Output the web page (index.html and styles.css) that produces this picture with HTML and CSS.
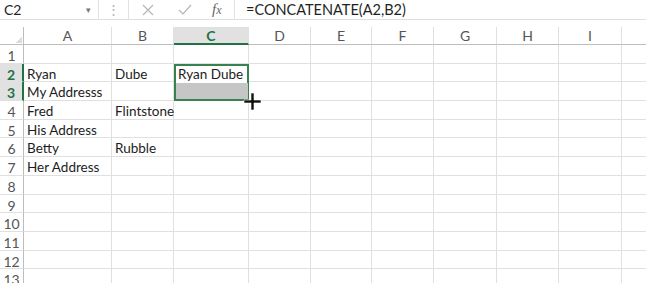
FILE: index.html
```html
<!DOCTYPE html>
<html>
<head>
  <meta charset="UTF-8">
  <title>Sheet1</title>
  <link rel="stylesheet" href="styles.css">
</head>
<body>
  <div class="formula-bar">
    <div class="name-box">C2 <span class="caret">&#9662;</span></div>
    <div class="grip">&#8942;</div>
    <div class="fx-buttons">
      <svg class="btn-x" width="12" height="12" viewBox="0 0 12 12"><path d="M1 1 L11 11 M11 1 L1 11" stroke="#b5b5b5" stroke-width="1.2" fill="none"/></svg>
      <svg class="btn-ok" width="14" height="11" viewBox="0 0 14 11"><path d="M1 6 L5 10 L13 1" stroke="#b5b5b5" stroke-width="1.2" fill="none"/></svg>
      <span class="fx">f<span class="x">x</span></span>
    </div>
    <div class="formula">=CONCATENATE(A2,B2)</div>
  </div>

  <div class="sheet-wrap">
  <div class="sheet">
    <div class="corner"></div>
    <div class="ch">A</div><div class="ch">B</div><div class="ch sel">C</div><div class="ch">D</div><div class="ch">E</div>
    <div class="ch">F</div><div class="ch">G</div><div class="ch">H</div><div class="ch">I</div><div class="ch"></div>

    <div class="rh">1</div><div></div><div></div><div></div><div></div><div></div><div></div><div></div><div></div><div></div><div></div>

    <div class="rh sel">2</div><div>Ryan</div><div>Dube</div>
    <div class="active">
      <div class="active-top">Ryan Dube</div>
      <div class="active-fill"></div>
      <svg class="cross" width="19" height="19" viewBox="0 0 19 19">
        <path d="M8 1 H11 V8 H18 V11 H11 V18 H8 V11 H1 V8 H8 Z" fill="#111" stroke="#fff" stroke-width="0.6"/>
      </svg>
    </div>
    <div></div><div></div><div></div><div></div><div></div><div></div><div></div>

    <div class="rh sel">3</div><div>My Addresss</div><div></div><div></div><div></div><div></div><div></div><div></div><div></div><div></div>

    <div class="rh">4</div><div>Fred</div><div>Flintstone</div><div></div><div></div><div></div><div></div><div></div><div></div><div></div><div></div>
    <div class="rh">5</div><div>His Address</div><div></div><div></div><div></div><div></div><div></div><div></div><div></div><div></div><div></div>
    <div class="rh">6</div><div>Betty</div><div>Rubble</div><div></div><div></div><div></div><div></div><div></div><div></div><div></div><div></div>
    <div class="rh">7</div><div>Her Address</div><div></div><div></div><div></div><div></div><div></div><div></div><div></div><div></div><div></div>
    <div class="rh">8</div><div></div><div></div><div></div><div></div><div></div><div></div><div></div><div></div><div></div><div></div>
    <div class="rh">9</div><div></div><div></div><div></div><div></div><div></div><div></div><div></div><div></div><div></div><div></div>
    <div class="rh">10</div><div></div><div></div><div></div><div></div><div></div><div></div><div></div><div></div><div></div><div></div>
    <div class="rh">11</div><div></div><div></div><div></div><div></div><div></div><div></div><div></div><div></div><div></div><div></div>
    <div class="rh">12</div><div></div><div></div><div></div><div></div><div></div><div></div><div></div><div></div><div></div><div></div>
    <div class="rh">13</div><div></div><div></div><div></div><div></div><div></div><div></div><div></div><div></div><div></div><div></div>
  </div>
  </div>
</body>
</html>
```

FILE: styles.css
```css
html, body { margin: 0; padding: 0; background: #fff; overflow: hidden; }
body { font-family: Lato, "Open Sans", sans-serif; width: 646px; height: 283px; }

.formula-bar { display: flex; height: 19px; border-bottom: 1px solid #dedede; align-items: stretch; }
.name-box { width: 99px; box-sizing: border-box; border-right: 1px solid #e2e2e2; display: flex; justify-content: space-between; align-items: center; padding: 0 7px 0 4px; font-size: 14px; color: #222; }
.caret { font-size: 9px; color: #777; }
.grip { width: 29px; text-align: center; color: #b0b0b0; font-size: 13px; line-height: 19px; }
.fx-buttons { width: 107px; box-sizing: border-box; border-left: 1px solid #e2e2e2; border-right: 1px solid #e2e2e2; display: flex; align-items: center; padding-left: 13px; }
.btn-x { margin-right: 24px; }
.btn-ok { margin-right: 20px; }
.fx { font-family: "Liberation Serif", serif; font-style: italic; font-size: 15px; color: #666; }
.fx .x { font-size: 12px; }
.formula { padding-left: 11px; font-size: 14.5px; color: #1f1f1f; line-height: 19px; }

.sheet-wrap { margin-top: 7px; width: 646px; height: 256px; overflow: hidden; }
.sheet {
  display: grid;
  grid-template-columns: 24px 88px 62px 75px 62px 61px 62px 63px 62px 63px 62px;
  grid-template-rows: 18px repeat(13, 18.7px);
  font-size: 13.5px;
  color: #1c1c1c;
}
.sheet > div { box-sizing: border-box; border-right: 1px solid #e0e0e0; border-bottom: 1px solid #e0e0e0; padding: 2px 0 0 3px; line-height: 17px; white-space: nowrap; }

.sheet > .corner { padding: 0; border-right: 1px solid #bdbdbd; border-bottom: 1px solid #bdbdbd; background: linear-gradient(135deg, transparent 69%, #dcdcdc 69%) no-repeat right 1px bottom 1px / 11px 11px; }
.sheet > .ch { text-align: center; color: #555; font-size: 14px; padding: 0; border-bottom-color: #bdbdbd; }
.sheet > .rh { text-align: center; color: #555; font-size: 14px; padding: 2px 0 0; border-right-color: #bdbdbd; }
.sheet > .ch.sel { background: #e1e1e1; color: #217346; font-weight: bold; border-bottom: 2px solid #217346; }
.sheet > .rh.sel { background: #e1e1e1; color: #217346; font-weight: bold; border-right: 2px solid #217346; }

.sheet > .active { grid-row: span 2; position: relative; padding: 0; border: 2px solid #3a8152; display: flex; flex-direction: column; }
.active-top { flex: 1; padding: 0 0 0 2px; }
.active-fill { flex: 1; background: #c6c6c6; margin-right: -1px; }
.cross { position: absolute; right: -15px; bottom: -12px; }
```
